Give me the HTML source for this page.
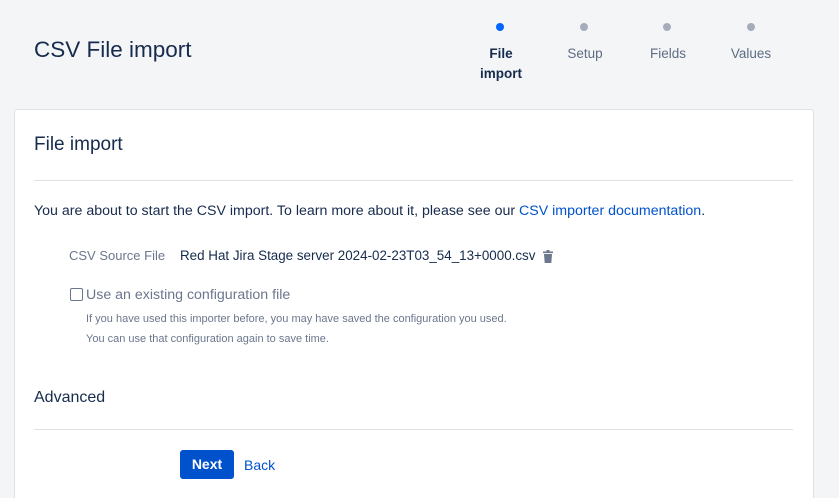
<!DOCTYPE html>
<html style="height:498px;overflow:hidden"><head><meta charset="utf-8"><style>
body{margin:0;width:839px;height:498px;background:#f4f5f7;font-family:"Liberation Sans",sans-serif;color:#172b4d;position:relative;overflow:hidden}
.a{position:absolute;white-space:nowrap}
.dot{position:absolute;width:8px;height:8px;border-radius:50%;background:#a5adba;top:23px}
.st{position:absolute;top:44px;font-size:13.5px;color:#5e6c84;text-align:center;line-height:20px}
.panel{position:absolute;left:14px;top:109px;width:798px;height:400px;background:#fff;border:1px solid #dfe1e6;border-radius:3px}
.hr{position:absolute;left:34px;width:759px;height:1px;background:#dfe1e6}
a{color:#0052cc;text-decoration:none}
</style></head><body>
<div class="a" style="left:34px;top:37px;font-size:22.5px;color:#172b4d">CSV File import</div>
<div class="dot" style="left:496px;background:#0065ff"></div>
<div class="dot" style="left:580px"></div>
<div class="dot" style="left:663px"></div>
<div class="dot" style="left:747px"></div>
<div class="st" style="left:470px;width:62px;font-weight:bold;color:#172b4d">File<br>import</div>
<div class="st" style="left:555px;width:60px">Setup</div>
<div class="st" style="left:638px;width:60px">Fields</div>
<div class="st" style="left:721px;width:60px">Values</div>
<div class="panel"></div>
<div class="a" style="left:34px;top:134px;font-size:19px">File import</div>
<div class="hr" style="top:180px"></div>
<div class="a" style="left:34px;top:203px;font-size:14.2px">You are about to start the CSV import. To learn more about it, please see our <a>CSV importer documentation</a>.</div>
<div class="a" style="left:69px;top:248px;font-size:13px;color:#6b778c">CSV Source File</div>
<div class="a" style="left:180px;top:248px;font-size:13.4px">Red Hat Jira Stage server 2024-02-23T03_54_13+0000.csv</div>
<svg class="a" style="left:543px;top:250px" width="10" height="13" viewBox="0 0 10 13"><rect x="0" y="1.5" width="10" height="1.6" fill="#6b778c"/><rect x="3.5" y="0" width="3" height="2" fill="#6b778c"/><path d="M1 4h8l-.7 9H1.7z" fill="#6b778c"/></svg>
<div class="a" style="left:70px;top:288px;width:11px;height:11px;border:1px solid #6b778c;border-radius:2px"></div>
<div class="a" style="left:86px;top:287px;font-size:14.2px;color:#6b778c">Use an existing configuration file</div>
<div class="a" style="left:86px;top:313px;font-size:11px;color:#6b778c">If you have used this importer before, you may have saved the configuration you used.</div>
<div class="a" style="left:86px;top:333px;font-size:11px;color:#6b778c">You can use that configuration again to save time.</div>
<div class="a" style="left:34px;top:389px;font-size:16px">Advanced</div>
<div class="hr" style="top:429px"></div>
<div class="a" style="left:180px;top:450px;width:54px;height:29px;background:#0052cc;border-radius:3px;color:#fff;font-weight:bold;font-size:14px;text-align:center;line-height:29px">Next</div>
<div class="a" style="left:244px;top:457px;font-size:14px;color:#0052cc">Back</div>
</body></html>
